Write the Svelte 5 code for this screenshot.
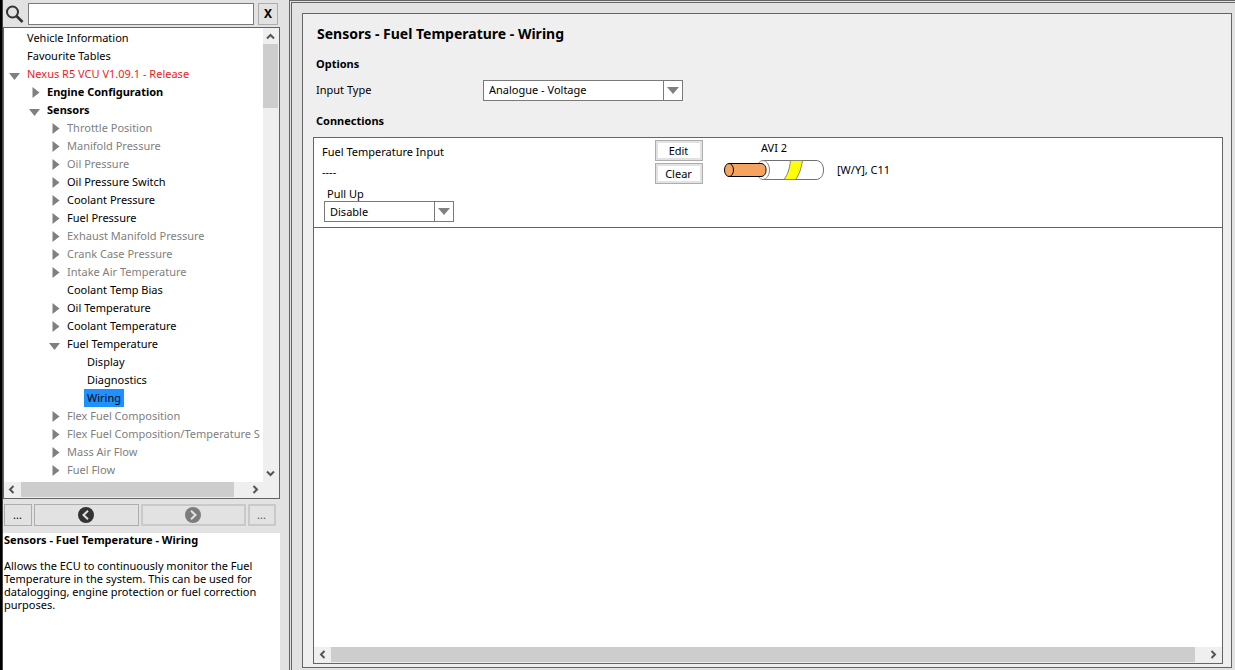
<script>
  const rows = [
    { text: 'Vehicle Information', level: 0 },
    { text: 'Favourite Tables', level: 0 },
    { text: 'Nexus R5 VCU V1.09.1 - Release', level: 0, state: 'open', tone: 'alert' },
    { text: 'Engine Configuration', level: 1, state: 'closed', tone: 'strong' },
    { text: 'Sensors', level: 1, state: 'open', tone: 'strong' },
    { text: 'Throttle Position', level: 2, state: 'closed', tone: 'dim' },
    { text: 'Manifold Pressure', level: 2, state: 'closed', tone: 'dim' },
    { text: 'Oil Pressure', level: 2, state: 'closed', tone: 'dim' },
    { text: 'Oil Pressure Switch', level: 2, state: 'closed' },
    { text: 'Coolant Pressure', level: 2, state: 'closed' },
    { text: 'Fuel Pressure', level: 2, state: 'closed' },
    { text: 'Exhaust Manifold Pressure', level: 2, state: 'closed', tone: 'dim' },
    { text: 'Crank Case Pressure', level: 2, state: 'closed', tone: 'dim' },
    { text: 'Intake Air Temperature', level: 2, state: 'closed', tone: 'dim' },
    { text: 'Coolant Temp Bias', level: 2 },
    { text: 'Oil Temperature', level: 2, state: 'closed' },
    { text: 'Coolant Temperature', level: 2, state: 'closed' },
    { text: 'Fuel Temperature', level: 2, state: 'open' },
    { text: 'Display', level: 3 },
    { text: 'Diagnostics', level: 3 },
    { text: 'Wiring', level: 3, tone: 'selected' },
    { text: 'Flex Fuel Composition', level: 2, state: 'closed', tone: 'dim' },
    { text: 'Flex Fuel Composition/Temperature S', level: 2, state: 'closed', tone: 'dim' },
    { text: 'Mass Air Flow', level: 2, state: 'closed', tone: 'dim' },
    { text: 'Fuel Flow', level: 2, state: 'closed', tone: 'dim' }
  ];
  const chevrons = {
    up: 'M4 9.5 7.5 6 11 9.5',
    down: 'M4 5.5 7.5 9 11 5.5',
    left: 'M9.5 4 6 7.5 9.5 11',
    right: 'M5.5 4 9 7.5 5.5 11'
  };
</script>

{#snippet chevron(dir)}
  <button class="step" aria-label="Scroll {dir}">
    <svg width="15" height="15" viewBox="0 0 15 15"><path d={chevrons[dir]} fill="none" stroke="#555" stroke-width="2" /></svg>
  </button>
{/snippet}

{#snippet caret()}
  <span class="caret">
    <svg width="12" height="8" viewBox="0 0 12 8"><path d="M0 0H12L6 7Z" fill="#808080" /></svg>
  </span>
{/snippet}

<div class="app">
  <aside>
    <form class="search" onsubmit={(e) => e.preventDefault()}>
      <label for="search" aria-label="Search">
        <svg width="20" height="20" viewBox="0 0 20 20" fill="none" stroke="#333">
          <circle cx="6.5" cy="8" r="5.5" stroke-width="2" />
          <path d="M10.500 12 16.500 18" stroke-width="2.6" />
        </svg>
      </label>
      <input id="search" type="text" />
      <button class="clear" type="button">X</button>
    </form>

    <nav class="tree">
      <ul>
        {#each rows as row}
          <li style:padding-left="{row.level * 20}px">
            {#if row.state}
              <button class="toggle" aria-label="Toggle {row.text}">
                {#if row.state === 'open'}
                  <svg width="20" height="18" viewBox="0 0 20 18"><path d="M5 8H16L10.5 15Z" fill="#808080" /></svg>
                {:else}
                  <svg width="20" height="18" viewBox="0 0 20 18"><path d="M8.500 4V15L15.500 9.500Z" fill="#808080" /></svg>
                {/if}
              </button>
            {:else}
              <span class="toggle"></span>
            {/if}
            <a class={row.tone} href="#{row.text}">{row.text}</a>
          </li>
        {/each}
      </ul>
      <div class="vbar">
        {@render chevron('up')}
        <div class="vthumb"></div>
        <span class="grow"></span>
        {@render chevron('down')}
      </div>
      <div class="hbar">
        {@render chevron('left')}
        <div class="hthumb"></div>
        {@render chevron('right')}
      </div>
    </nav>

    <div class="history">
      <button>...</button>
      <button aria-label="Back">
        <svg width="16" height="16" viewBox="0 0 16 16"><circle cx="8" cy="8" r="8" fill="#333" /><path d="M10 3.8 5.5 8 10 12.2" fill="none" stroke="#e2e2e2" stroke-width="2" /></svg>
      </button>
      <button class="off" aria-label="Forward">
        <svg width="16" height="16" viewBox="0 0 16 16"><circle cx="8" cy="8" r="8" fill="#7c7c7c" /><path d="M6 3.8 10.5 8 6 12.2" fill="none" stroke="#e2e2e2" stroke-width="2" /></svg>
      </button>
      <button class="off">...</button>
    </div>

    <section class="help">
      <h2>Sensors - Fuel Temperature - Wiring</h2>
      <p>Allows the ECU to continuously monitor the Fuel Temperature in the system. This can be used for datalogging, engine protection or fuel correction purposes.</p>
    </section>
  </aside>

  <div class="frame">
    <main>
      <h1>Sensors - Fuel Temperature - Wiring</h1>
      <h2>Options</h2>
      <div class="field">
        <label for="type">Input Type</label>
        <span class="select wide">
          <select id="type"><option>Analogue - Voltage</option></select>
          {@render caret()}
        </span>
      </div>
      <h2>Connections</h2>
      <section class="connections">
        <div class="connection">
          <div class="input">
            <span>Fuel Temperature Input</span>
            <span>----</span>
            <label for="pull">Pull Up</label>
            <span class="select">
              <select id="pull"><option>Disable</option></select>
              {@render caret()}
            </span>
          </div>
          <div class="actions">
            <button>Edit</button>
            <button>Clear</button>
          </div>
          <div class="pin">
            <span>AVI 2</span>
            <svg width="100" height="21" viewBox="0 0 100 21" stroke-width="1">
              <path d="M39 .5H92C96.500 .5 99.500 4.500 99.500 10S96.500 19.500 92 19.500H39" fill="#fff" stroke="#707070" />
              <ellipse cx="39" cy="10" rx="6.500" ry="9.500" fill="#fff" stroke="#808080" />
              <path d="M66.500 .5H78.500C77 9 75.500 14 71.500 19.500H60C64 14 65.500 9 66.500 .5Z" fill="#ff0" stroke="#808080" />
              <path d="M5 3.500H37C40 3.500 42 6 42 10S40 16.500 37 16.500H5Z" fill="#f4a460" stroke="#000" />
              <ellipse cx="5" cy="10" rx="4.500" ry="6.500" fill="#f4a460" stroke="#000" />
            </svg>
          </div>
          <span class="code">[W/Y], C11</span>
        </div>
        <span class="grow"></span>
        <div class="hbar page">
          {@render chevron('left')}
          <div class="hthumb"></div>
          {@render chevron('right')}
        </div>
      </section>
    </main>
  </div>
</div>

<style>
  :global(body) { margin: 0; background: #e2e2e2; }
  * { box-sizing: border-box; }
  .app {
    display: flex;
    height: 100vh;
    border-left: 2px solid #000;
    background: #e2e2e2;
    color: #000;
    font: 11px/18px "Noto Sans", "Open Sans", sans-serif;
    overflow: hidden;
  }
  button, input, select { font: inherit; color: inherit; margin: 0; }
  button { display: flex; align-items: center; justify-content: center; padding: 0; border: 1px solid #adadad; background: #e2e2e2; }
  h1, h2, p, ul { margin: 0; padding: 0; font-size: 11px; }
  svg { display: block; flex: none; }
  .grow { flex: 1; }

  aside { display: flex; flex-direction: column; flex: none; width: 278px; border-left: 1px solid #444; }
  .search { display: flex; align-items: center; height: 27px; padding: 0 2px 0 3px; }
  .search label { width: 22px; }
  .search input { flex: 1; min-width: 0; height: 22px; border: 1px solid #7a7a7a; background: #fff; }
  .clear { width: 20px; height: 22px; margin-left: 4px; font-size: 12px; font-weight: 700; }

  .tree {
    display: grid;
    grid-template: minmax(0, 1fr) 16px / minmax(0, 1fr) 16px;
    height: 472px;
    border: 1px solid #646464;
    background: #efefef;
  }
  ul { overflow: hidden; padding-top: 1px; list-style: none; background: #fff; }
  li { display: flex; height: 18px; white-space: nowrap; }
  .toggle { flex: none; width: 20px; height: 18px; border: 0; background: none; }
  a { padding: 0 3px; color: #000; text-decoration: none; }
  a.alert { color: #ee1c1c; }
  a.strong { font-weight: 700; }
  a.dim { color: #808080; }
  a.selected { background: #1e90ff; }
  .vbar { display: flex; flex-direction: column; padding-right: 1px; background: #efefef; }
  .step { width: 15px; height: 16px; border: 0; background: none; flex: none; }
  .vbar .step:last-child { height: 18px; }
  .vthumb { height: 64px; background: #cdcdcd; }
  .hbar { display: flex; gap: 2px; padding-bottom: 1px; background: #efefef; }
  .hbar .step { height: 15px; }
  .hthumb { flex: 1; margin-right: 12px; background: #cdcdcd; }

  .history { display: grid; grid-template-columns: 28px 1fr 1fr 28px; gap: 2px; padding: 5px 4px 7px 1px; height: 34px; }
  .history button { padding-right: 1px; }
  .history .off { border: 2px solid #c9c9c9; color: #555; }
  .help { flex: 1; padding: 0 1px; background: #fff; line-height: 13px; }
  .help h2 { padding-bottom: 13px; }

  .frame {
    display: flex;
    flex: 1;
    min-width: 0;
    margin-left: 9px;
    padding: 10px 3px 2px 10px;
    border: 3px double #646464;
    border-width: 3px 0 0 3px;
  }
  main { display: flex; flex-direction: column; flex: 1; min-width: 0; padding: 10px 8px 3px 10px; border: 1px solid #646464; background: #efefef; }
  h1 { padding: 0 0 12px 4px; font-size: 14px; line-height: 20px; }
  main h2 { padding-left: 3px; line-height: 16px; }
  .field { display: flex; align-items: center; padding: 8px 0 12px 3px; }
  .field label { width: 167px; padding-bottom: 2px; }
  .select { display: flex; width: 130px; height: 21px; border: 1px solid #7a7a7a; background: #fff; }
  .wide { width: 200px; }
  select { flex: 1; min-width: 0; padding: 0 5px 2px; appearance: none; border: 0; border-radius: 0; background: none; }
  .caret { display: flex; align-items: center; justify-content: center; width: 19px; border-left: 1px solid #7a7a7a; pointer-events: none; }
  .connections { display: flex; flex-direction: column; flex: 1; margin-top: 8px; border: 1px solid #646464; background: #fff; }
  .connection { display: flex; align-items: flex-start; height: 90px; border-bottom: 1px solid #646464; }
  .input { display: flex; flex-direction: column; width: 341px; padding: 4px 8px; line-height: 20px; }
  .input label { padding-left: 5px; line-height: 15px; margin-top: 4px; }
  .input .select { margin-left: 2px; }
  .actions { display: grid; gap: 2px; padding-top: 2px; }
  .actions button { width: 48px; height: 21px; padding-right: 1px; background: #fff; box-shadow: inset 0 0 0 2px #e2e2e2; }
  .pin { display: flex; flex-direction: column; align-items: center; margin-left: 21px; padding-top: 2px; line-height: 16px; }
  .pin svg { margin-top: 4px; }
  .code { margin-left: 13px; padding-top: 24px; line-height: 16px; }
  .page { gap: 0; }
  .page .step { width: 17px; }
  .page .hthumb { margin: 0 10px 0 0; }
</style>
